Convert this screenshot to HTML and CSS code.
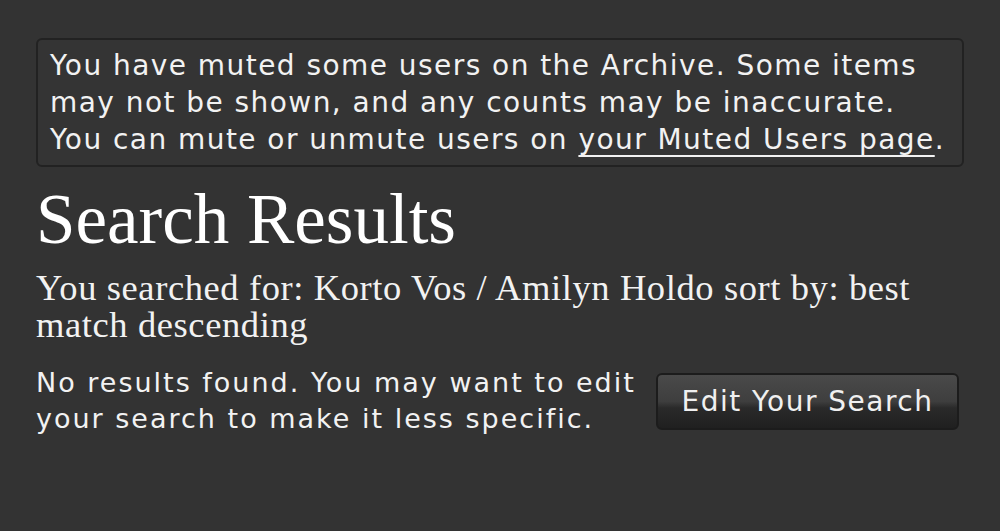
FILE: index.html
```html
<!DOCTYPE html>
<html>
<head>
<meta charset="utf-8">
<link rel="stylesheet" href="styles.css">
</head>
<body>
<main class="page">
  <div class="notice">
    <p>You have muted some users on the Archive. Some items may not be shown, and any counts may be inaccurate. You can mute or unmute users on <a href="#">your Muted Users page</a>.</p>
  </div>
  <h2 class="heading">Search Results</h2>
  <p class="query">You searched for: Korto Vos / Amilyn Holdo sort by: best match descending</p>
  <div class="empty">
    <p class="empty-text">No results found. You may want to edit your search to make it less specific.</p>
    <a class="button" href="#">Edit Your Search</a>
  </div>
</main>
</body>
</html>
```

FILE: styles.css
```css
html, body {
  margin: 0;
  padding: 0;
  background: #333333;
  color: #f2f2f2;
}
body {
  font-family: "DejaVu Sans", Verdana, sans-serif;
}
.page {
  padding: 38px 36px 0 36px;
}
.notice {
  border: 2px solid #222222;
  border-radius: 6px;
  background: #343434;
  padding: 7px 12px 7px 12px;
  box-sizing: border-box;
  width: 928px;
}
.notice p {
  margin: 0;
  font-size: 28px;
  letter-spacing: 1.45px;
  line-height: 37px;
}
.notice a {
  color: #f2f2f2;
  text-decoration: underline;
  text-decoration-thickness: 2px;
  text-underline-offset: 6px;
}
.heading {
  font-family: "Liberation Serif", Georgia, serif;
  font-weight: normal;
  font-size: 71px;
  line-height: 76px;
  margin: 14px 0 0 0;
  color: #ffffff;
}
.query {
  font-family: "Liberation Serif", Georgia, serif;
  font-size: 36.5px;
  letter-spacing: 0.6px;
  line-height: 37px;
  margin: 12px 0 0 0;
  color: #f2f2f2;
}
.empty {
  display: flex;
  align-items: center;
  gap: 20px;
  margin-top: 22px;
}
.empty-text {
  margin: 0;
  width: 600px;
  font-size: 27px;
  letter-spacing: 2px;
  line-height: 36px;
}
.button {
  display: inline-block;
  flex: none;
  width: 303px;
  height: 57px;
  box-sizing: border-box;
  border: 2px solid #1c1c1c;
  border-radius: 6px;
  background: linear-gradient(to bottom, #4a4a4a 0%, #3e3e3e 50%, #2a2a2a 62%, #202020 100%);
  color: #f0f0f0;
  text-decoration: none;
  font-size: 28px;
  letter-spacing: 1.5px;
  line-height: 53px;
  text-align: center;
}
```
